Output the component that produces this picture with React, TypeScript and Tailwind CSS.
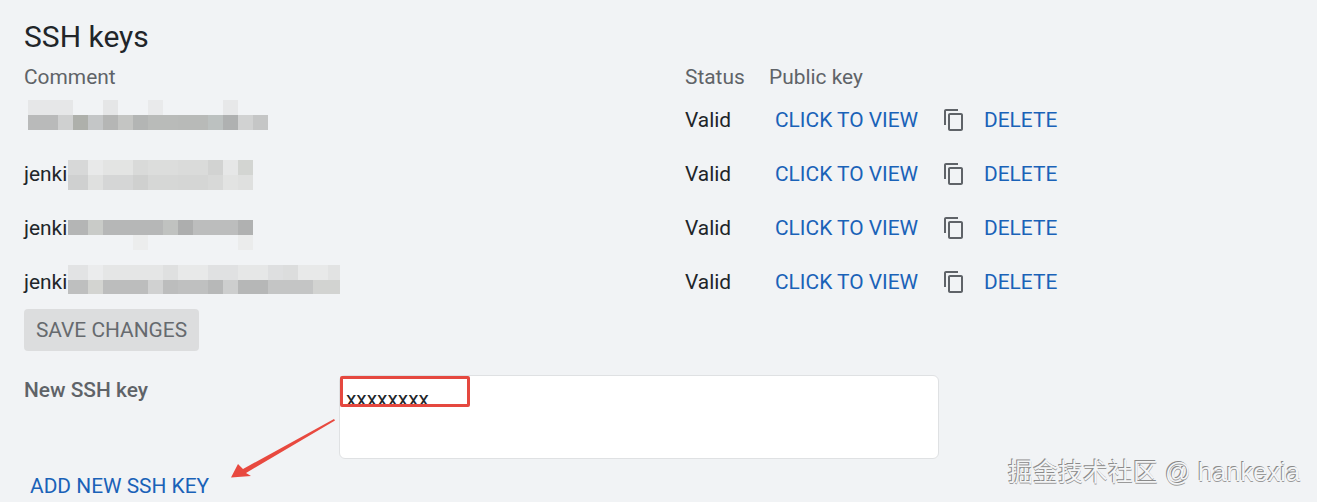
const FONT = "font-['Roboto','Noto_Sans_CJK_SC',sans-serif]";

type Seg = [number, string];
type Band = { h: number; segs: Seg[] };

const rows: { prefix: string; ml: number; mt: number; bands: Band[] }[] = [
  {
    prefix: "",
    ml: 4,
    mt: -10,
    bands: [
      {
        h: 15,
        segs: [
          [45, "#e6e7e8"], [30, "#f1f3f5"], [15, "#e5e6e7"], [30, "#f1f3f5"], [15, "#e9eaeb"],
          [60, "#f1f3f5"], [15, "#e7e8e9"], [30, "#f1f3f5"],
        ],
      },
      {
        h: 15,
        segs: [
          [30, "#b9baba"], [15, "#cfd0d0"], [15, "#aeb0ab"], [15, "#c4c6c7"], [15, "#b5b6b5"],
          [15, "#c4c5c3"], [15, "#b3b5b4"], [30, "#b9bbb9"], [30, "#b8bab8"], [15, "#bcc1c0"],
          [15, "#afb1b1"], [15, "#d1d2d2"], [15, "#c5c6c6"],
        ],
      },
    ],
  },
  {
    prefix: "jenki",
    ml: 1,
    mt: 2,
    bands: [
      {
        h: 15,
        segs: [
          [20, "#d7d8d8"], [15, "#e8e9e9"], [30, "#e3e4e3"], [15, "#d9dad9"], [30, "#dcdddc"],
          [30, "#dadbda"], [15, "#d2d3d2"], [15, "#e6e7e7"], [15, "#d3d5d2"],
        ],
      },
      {
        h: 15,
        segs: [
          [20, "#cfd0d0"], [15, "#dfe0df"], [30, "#d5d6d6"], [15, "#cfd0cf"], [30, "#d6d7d6"],
          [30, "#d5d6d5"], [15, "#d8d9d8"], [15, "#e2e3e2"], [15, "#dfe0df"],
        ],
      },
    ],
  },
  {
    prefix: "jenki",
    ml: 1,
    mt: 14,
    bands: [
      {
        h: 15,
        segs: [
          [20, "#b4b5b5"], [15, "#c9cbc8"], [60, "#b6b7b7"], [15, "#c0c2c0"], [15, "#adaeae"],
          [45, "#bcbdbd"], [15, "#b0b1b1"],
        ],
      },
      {
        h: 15,
        segs: [
          [65, "#f1f3f5"], [15, "#eceded"], [90, "#f1f3f5"], [15, "#ebecec"],
        ],
      },
    ],
  },
  {
    prefix: "jenki",
    ml: 1,
    mt: -5,
    bands: [
      {
        h: 15,
        segs: [
          [20, "#e2e3e4"], [15, "#ebeced"], [60, "#e5e6e6"], [15, "#dfe0e0"], [30, "#e8e9e9"],
          [30, "#e0e1e2"], [30, "#e6e7e7"], [15, "#dedfe0"], [15, "#dcdddd"], [30, "#e8e9e9"], [12, "#e2e3e3"],
        ],
      },
      {
        h: 14,
        segs: [
          [20, "#bebfbf"], [15, "#d3d4d1"], [45, "#bcbdbd"], [15, "#d0d1d1"], [15, "#bcbdbd"],
          [30, "#bfc0c0"], [15, "#b7b8b8"], [15, "#cdcece"], [30, "#b6b7b7"], [45, "#c4c5c5"],
          [27, "#d2d3d1"],
        ],
      },
    ],
  },
];

function Mosaic({ bands }: { bands: Band[] }) {
  return (
    <div className="flex flex-col">
      {bands.map((b, i) => (
        <div key={i} className="flex" style={{ height: b.h }}>
          {b.segs.map(([w, c], j) => (
            <div key={j} style={{ width: w, backgroundColor: c }} />
          ))}
        </div>
      ))}
    </div>
  );
}

function CopyIcon() {
  return (
    <svg viewBox="0 0 24 24" className="w-6 h-6 fill-[#5f6368]">
      <path d="M16 1H4c-1.1 0-2 .9-2 2v14h2V3h12V1zm3 4H8c-1.1 0-2 .9-2 2v14c0 1.1.9 2 2 2h11c1.1 0 2-.9 2-2V7c0-1.1-.9-2-2-2zm0 16H8V7h11v14z" />
    </svg>
  );
}

export default function App() {
  return (
    <div className={`${FONT} relative w-[1317px] h-[502px] overflow-hidden bg-[#f1f3f5] pl-6 pt-[16px] text-[#212529]`}>
      <h1 className="text-[30px] leading-[42px] font-normal h-[46px]">SSH keys</h1>

      <div className="grid grid-cols-[661px_84px_1fr] text-[20.9px]">
        <div className="h-[31px] leading-[30px] text-[#5f6368]">Comment</div>
        <div className="h-[31px] leading-[30px] text-[#5f6368]">Status</div>
        <div className="h-[31px] leading-[30px] text-[#5f6368]">Public key</div>

        {rows.map((r, i) => (
          <div key={i} className="contents">
            <div className="h-[54px] flex items-center">
              <span className="pt-[2px]">{r.prefix}</span>
              <div style={{ marginLeft: r.ml, marginTop: r.mt }}>
                <Mosaic bands={r.bands} />
              </div>
            </div>
            <div className="h-[54px] flex items-center pt-[2px]">Valid</div>
            <div className="h-[54px] flex items-center">
              <a className="pl-[6px] pt-[2px] w-[173px] text-[#1a62b8]">CLICK TO VIEW</a>
              <CopyIcon />
              <a className="ml-[18px] pt-[2px] text-[#1a62b8]">DELETE</a>
            </div>
          </div>
        ))}
      </div>

      <button className="h-[42px] w-[175px] rounded-[4px] bg-[#dcddde] pt-[2px] text-[20.9px] text-[#666a6e]">
        SAVE CHANGES
      </button>

      <div className="mt-6 flex items-start">
        <label className="w-[315px] text-[20.9px] leading-[30px] font-medium text-[#5f6368]">New SSH key</label>
        <div className="w-[600px] h-[84px] rounded-[6px] border border-[#dfe1e3] bg-white pl-[6px] pt-[8px] text-[20.9px] leading-[30px] text-[#212529]">
          xxxxxxxx
        </div>
      </div>

      <a className="block mt-[12px] pl-[6px] text-[20.9px] leading-[30px] text-[#1a62b8]">ADD NEW SSH KEY</a>

      <div className="absolute left-[340px] top-[376px] w-[130px] h-[31px] border-[3px] border-[#e5483f] rounded-[2px]" />

      <svg className="absolute left-0 top-0 pointer-events-none" width="1317" height="502" viewBox="0 0 1317 502">
        <polygon fill="#e8493f" points="334,419 335,420.5 246,473 251,476 231,477.5 238,464 243,469" />
      </svg>

      <div className="absolute left-[1008px] top-[455px] leading-[34px] text-[#f4f5f6] [text-shadow:-1px_-1px_0_#8a8a8a,0_1px_0_#9a9a9a] whitespace-nowrap font-['Liberation_Sans','Noto_Sans_CJK_SC',sans-serif]">
        <span className="text-[25px]">掘金技术社区</span>
        <span className="text-[25.5px]"> @ hankexia</span>
      </div>
    </div>
  );
}
